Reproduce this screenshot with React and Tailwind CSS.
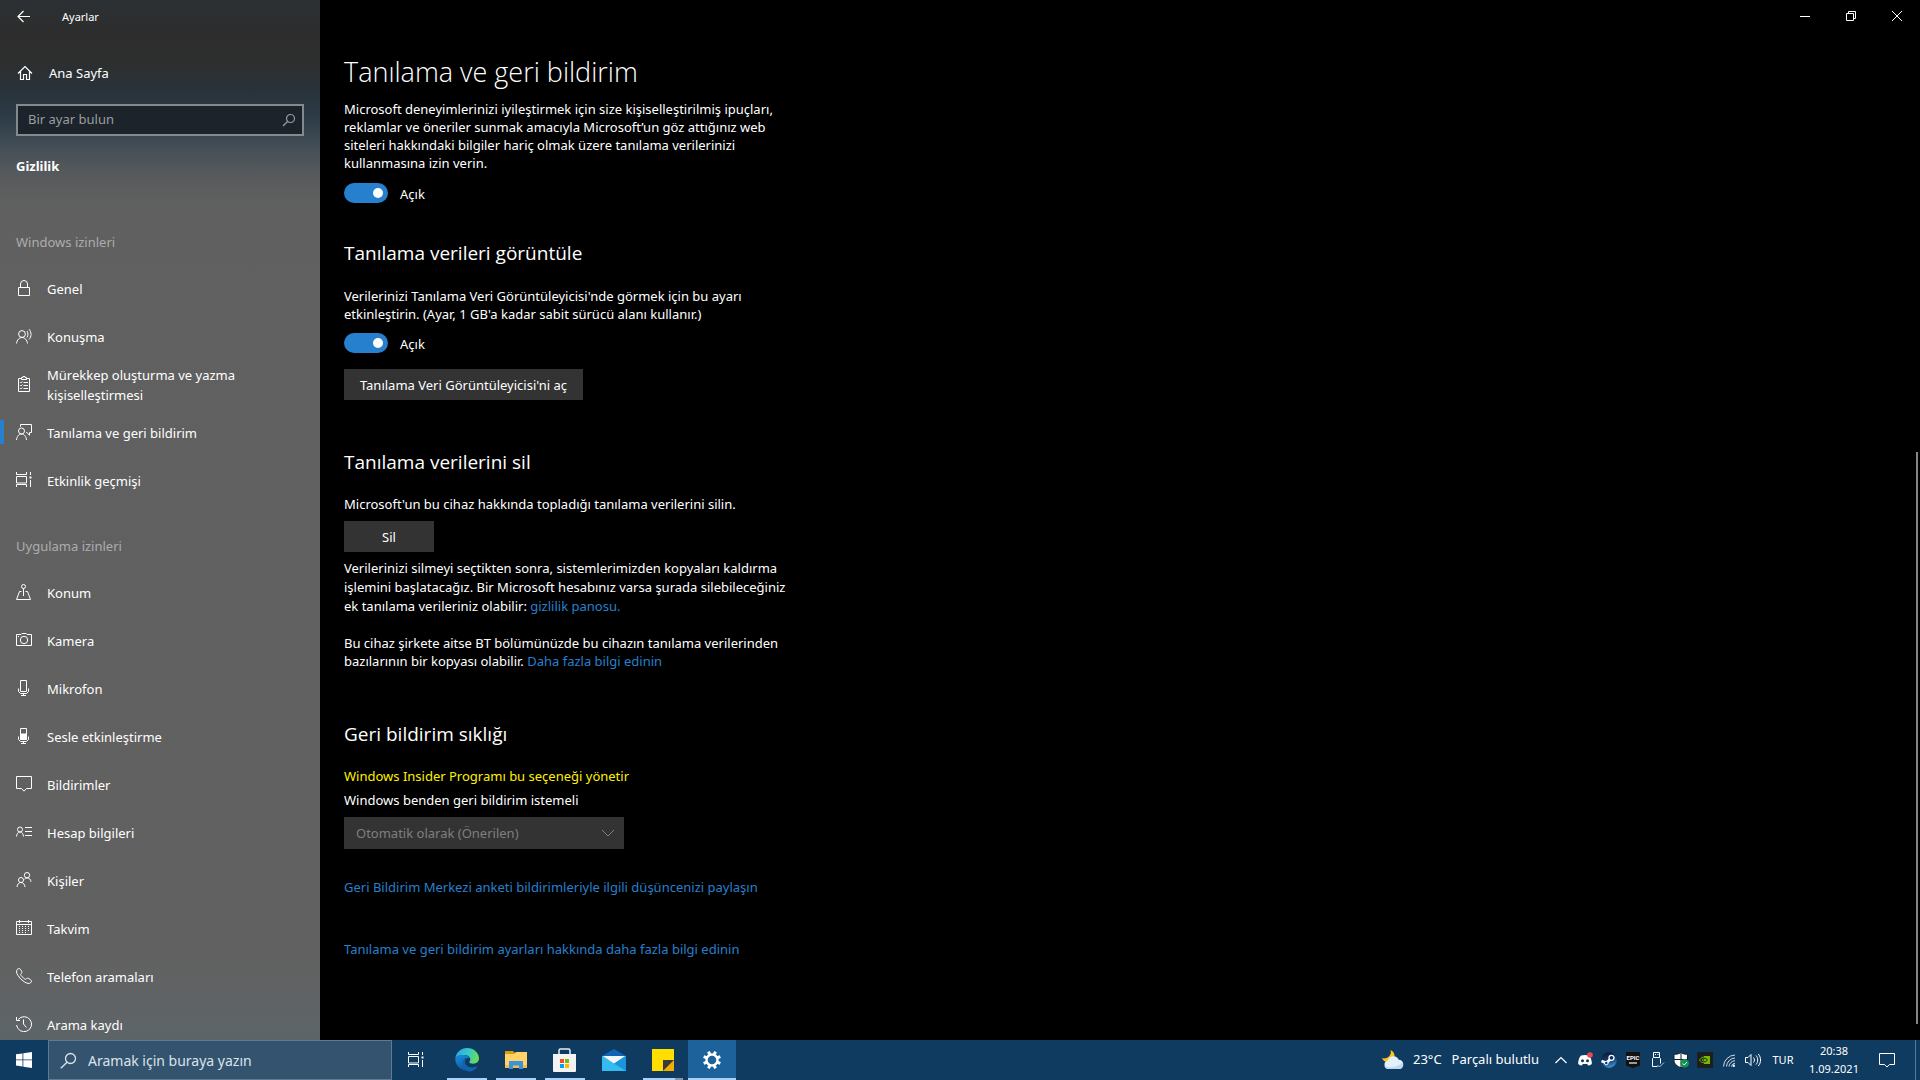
import React from "react";

function Icon({ children, size = "size-4", box = "0 0 16 16", className = "" }) {
  return (
    <svg
      viewBox={box}
      className={`${size} shrink-0 ${className}`}
      fill="none"
      stroke="currentColor"
      strokeWidth="1"
      aria-hidden="true"
    >
      {children}
    </svg>
  );
}

const icons = {
  lock: (
    <path d="M2.5 7.5h11v8h-11zM4.5 7.5V4a3.5 3.5 0 0 1 7 0v3.5" />
  ),
  speech: (
    <>
      <circle cx="6" cy="6" r="3.4" />
      <path d="M.5 15.500C1 12 3 9.500 6 9.500s5 2.500 5.500 6M11 3c1.300 2 1.300 4.500 0 6.500M13 1.200c2.700 3 2.700 7.300 0 10.300" />
    </>
  ),
  clipboard: (
    <>
      <path d="M5 2.500H2.500v13h11v-13H11M5.500 3.500v-2H7V.5h2v1h1.500v2zM7.500 6.500H12M7.500 9.500H12M7.500 12.500H12" />
      <path d="M4 6.200l.8.8L6.300 5.500M4 9.200l.8.8 1.500-1.500M4 12.200l.8.800 1.500-1.500" />
    </>
  ),
  feedback: (
    <>
      <circle cx="5.500" cy="7" r="3" />
      <path d="M.5 16c.4-3.500 2.200-6 5-6s4.600 2.500 5 6M4.500 2.800V.5h11v8h-2v2.700L10.800 8.500H10" />
    </>
  ),
  activity: (
    <>
      <path d="M.5 0v2.500h10V0M.5 4.500h10v6.500H.5zM.5 15v-2.500h10V15M14.500 0v3M14.500 8v7" />
      <rect x="13.500" y="4.500" width="2" height="2" fill="currentColor" stroke="none" />
    </>
  ),
  location: (
    <>
      <circle cx="7.500" cy="2.500" r="2" />
      <path d="M7.500 4.500V12M5.500 7.500h-2l-3 8h14l-3-8h-2" />
    </>
  ),
  camera: (
    <>
      <path d="M.5 2.500H5l.8-1h4.400l.8 1h4.500v11H.5z" />
      <circle cx="8" cy="8" r="3.700" />
      <path d="M2 4.500h1" />
    </>
  ),
  mic: (
    <path d="M4.500.5h6v11h-6zM2.500 8.500v3l2 2h6l2-2v-3M7.500 13.500v2M5 15.500h5" />
  ),
  voice: (
    <>
      <path d="M4.500.5h6v11h-6zM2.500 8.500v3l2 2h6l2-2v-3M7.500 13.500v2M5 15.500h5" />
      <path d="M4.500 6h6v5.500h-6z" fill="currentColor" />
    </>
  ),
  notify: <path d="M.5.5h15v12h-5L8 15.200 5.500 12.500h-5z" />,
  account: (
    <>
      <circle cx="4" cy="5.500" r="2.500" />
      <path d="M.5 12.500c.2-2.600 1.500-4.500 3.500-4.500s3.300 1.900 3.500 4.500M9 3.500h7M9 7.500h7M9 11.500h7" />
    </>
  ),
  people: (
    <>
      <circle cx="11" cy="3.200" r="2.700" />
      <circle cx="5" cy="8" r="2.500" />
      <path d="M1 15c.3-2.600 1.700-4.500 4-4.500S8.700 12.400 9 15M8.500 7.200c.7-.8 1.500-1.300 2.500-1.300 2.300 0 3.700 1.500 4 3.900" />
    </>
  ),
  calendar: (
    <>
      <path d="M.5 1.500h15v13H.5zM.5 4.500h15M3.500 0v3M12.500 0v3" />
      <path d="M3 6.500h10.500M3 8.500h10.500M3 10.500h10.500M3 12.500h7.500" strokeDasharray="1 2" />
    </>
  ),
  phone: (
    <path d="M1.300 1.400C2.300.3 3.600.2 4.400 1.300l1.200 1.900c.6 1 .2 1.700-.5 2.500-.6.6-.5 1.200 0 1.900l3.200 3.200c.7.6 1.300.7 1.900.1.8-.8 1.600-1 2.500-.4l1.900 1.200c1.100.8 1.100 2 .1 3-1.300 1.300-3.800.8-6.300-.8A19 19 0 0 1 2 7.500C.3 5 .1 2.700 1.300 1.400z" />
  ),
  history: (
    <path d="M2.200 3.500A7.500 7.500 0 1 1 .6 9M.5 1v3.500H4M7.500 3.500V8l3 3.500" />
  ),
};

const windowsPermissions = [
  ["lock", "Genel"],
  ["speech", "Konuşma"],
  ["clipboard", "Mürekkep oluşturma ve yazma kişiselleştirmesi"],
  ["feedback", "Tanılama ve geri bildirim"],
  ["activity", "Etkinlik geçmişi"],
];

const appPermissions = [
  ["location", "Konum"],
  ["camera", "Kamera"],
  ["mic", "Mikrofon"],
  ["voice", "Sesle etkinleştirme"],
  ["notify", "Bildirimler"],
  ["account", "Hesap bilgileri"],
  ["people", "Kişiler"],
  ["calendar", "Takvim"],
  ["phone", "Telefon aramaları"],
  ["history", "Arama kaydı"],
];

function NavList({ items, active }) {
  return (
    <ul className="mt-3">
      {items.map(([icon, label]) => (
        <li key={label}>
          <a
            href="#"
            aria-current={label === active ? "page" : undefined}
            className="relative flex h-12 items-center gap-[15px] pl-4 pr-16"
          >
            {label === active && <span className="absolute left-0 top-3 h-6 w-1 bg-[#2780cd]" />}
            <Icon>{icons[icon]}</Icon>
            <span className="pt-0.5 leading-5">{label}</span>
          </a>
        </li>
      ))}
    </ul>
  );
}

function Sidebar() {
  return (
    <aside className="w-80 shrink-0 overflow-hidden bg-[linear-gradient(180deg,#2c3034_0px,#2d2d2d_30px,#2d2e2e_60px,#29323a_90px,#2c3a45_115px,#3a4751_135px,#4a5358_155px,#585b5d_178px,#606060_205px,#616161_960px,#5f6467_1020px,#5c6468_1040px)] text-[13px]">
      <header className="flex h-[34px] items-center gap-[30px] pl-4">
        <button type="button" aria-label="Geri" className="size-4">
          <Icon>
            <path d="M2 7.500h12M7.500 2L2 7.500 7.500 13" strokeWidth="1.200" />
          </Icon>
        </button>
        <span className="text-[11px]">Ayarlar</span>
      </header>
      <a href="#" className="mt-[15px] flex h-12 items-center gap-4 pl-[17px]">
        <Icon>
          <path d="M1 8.500L8 1.500l7 7M3.500 6.500v8h3v-5h3v5h3v-8" strokeWidth="1.200" />
        </Icon>
        <span className="leading-5">Ana Sayfa</span>
      </a>
      <label className="mx-4 mt-[7px] flex h-8 items-center border-2 border-[#84898e] bg-[#1c232a] pl-2.5 pr-[5px] text-[#9a9ea1]">
        <input
          type="text"
          aria-label="Bir ayar bulun"
          placeholder="Bir ayar bulun"
          className="min-w-0 flex-1 bg-transparent outline-none placeholder:text-[#9a9ea1]"
        />
        <Icon>
          <circle cx="9.500" cy="6.500" r="4" strokeWidth="1.200" />
          <path d="M6.500 9.500L2 14" strokeWidth="1.200" />
        </Icon>
      </label>
      <h2 className="ml-4 mt-5 font-bold leading-5">Gizlilik</h2>
      <nav>
        <h3 className="ml-4 mt-14 leading-5 text-[#adadad]">Windows izinleri</h3>
        <NavList items={windowsPermissions} active="Tanılama ve geri bildirim" />
        <h3 className="ml-4 mt-8 leading-5 text-[#adadad]">Uygulama izinleri</h3>
        <NavList items={appPermissions} />
      </nav>
    </aside>
  );
}

function Toggle({ label }) {
  return (
    <label className="flex h-5 w-fit items-center gap-3">
      <input type="checkbox" role="switch" defaultChecked aria-label={label} className="peer sr-only" />
      <span className="flex h-5 w-11 items-center justify-end rounded-full bg-[#2780cd] pr-[5px]">
        <span className="size-2.5 rounded-full bg-white" />
      </span>
      <span className="pt-0.5">Açık</span>
    </label>
  );
}

function SectionTitle({ children, className }) {
  return (
    <h2 className={`font-['Open_Sans','Noto_Sans',sans-serif] text-[19px] leading-7 ${className}`}>
      {children}
    </h2>
  );
}

const linkColor = "text-[#2780cd]";

function Content() {
  return (
    <main className="relative min-w-0 flex-1 bg-black">
      <div className="flex h-8 justify-end">
        <button type="button" aria-label="Simge durumuna küçült" className="flex w-[46px] items-center justify-center">
          <Icon><path d="M3 8.500h10" /></Icon>
        </button>
        <button type="button" aria-label="Önceki boyut" className="flex w-[46px] items-center justify-center">
          <Icon><path d="M3.500 5.500h7v7h-7zM5.500 5.500v-2h7v7h-2" /></Icon>
        </button>
        <button type="button" aria-label="Kapat" className="flex w-[46px] items-center justify-center">
          <Icon><path d="M3 3l10 10M13 3L3 13" /></Icon>
        </button>
      </div>

      <div className="px-6 pt-[22px] text-[13px] leading-[18px]">
        <h1 className="font-['Open_Sans','Noto_Sans',sans-serif] text-[27px] font-light leading-9">
          Tanılama ve geri bildirim
        </h1>
        <p className="mb-[11px] mt-2.5">
          Microsoft deneyimlerinizi iyileştirmek için size kişiselleştirilmiş ipuçları,
          <br />
          reklamlar ve öneriler sunmak amacıyla Microsoft’un göz attığınız web
          <br />
          siteleri hakkındaki bilgiler hariç olmak üzere tanılama verilerinizi
          <br />
          kullanmasına izin verin.
        </p>
        <Toggle label="Kişiselleştirilmiş deneyimler" />

        <SectionTitle className="mt-9">Tanılama verileri görüntüle</SectionTitle>
        <p className="mb-2.5 mt-5">
          Verilerinizi Tanılama Veri Görüntüleyicisi'nde görmek için bu ayarı
          <br />
          etkinleştirin. (Ayar, 1 GB'a kadar sabit sürücü alanı kullanır.)
        </p>
        <Toggle label="Tanılama verileri görüntüle" />
        <button type="button" className="mt-4 block h-[31px] w-[239px] bg-[#333333]">
          Tanılama Veri Görüntüleyicisi'ni aç
        </button>

        <SectionTitle className="mt-12">Tanılama verilerini sil</SectionTitle>
        <p className="mt-[19px]">Microsoft'un bu cihaz hakkında topladığı tanılama verilerini silin.</p>
        <button type="button" className="mt-2 block h-[31px] w-[90px] bg-[#333333]">
          Sil
        </button>
        <p className="mt-[7px] leading-[19px]">
          Verilerinizi silmeyi seçtikten sonra, sistemlerimizden kopyaları kaldırma
          <br />
          işlemini başlatacağız. Bir Microsoft hesabınız varsa şurada silebileceğiniz
          <br />
          ek tanılama verileriniz olabilir: <a href="#" className={linkColor}>gizlilik panosu.</a>
        </p>
        <p className="mt-[18px]">
          Bu cihaz şirkete aitse BT bölümünüzde bu cihazın tanılama verilerinden
          <br />
          bazılarının bir kopyası olabilir. <a href="#" className={linkColor}>Daha fazla bilgi edinin</a>
        </p>

        <SectionTitle className="mt-[50px]">Geri bildirim sıklığı</SectionTitle>
        <p className="mt-[19px] text-[#fff000]">Windows Insider Programı bu seçeneği yönetir</p>
        <label htmlFor="frequency" className="mt-1.5 block">
          Windows benden geri bildirim istemeli
        </label>
        <div className="relative mt-2 w-[280px] text-[#7f7f7f]">
          <select
            id="frequency"
            disabled
            className="block h-8 w-full appearance-none bg-[#333333] pl-3 opacity-100"
          >
            <option>Otomatik olarak (Önerilen)</option>
          </select>
          <Icon className="pointer-events-none absolute right-2 top-2">
            <path d="M2 5l6 6 6-6" />
          </Icon>
        </div>
        <p className="mt-[29px]">
          <a href="#" className={linkColor}>Geri Bildirim Merkezi anketi bildirimleriyle ilgili düşüncenizi paylaşın</a>
        </p>
        <p className="mt-11">
          <a href="#" className={linkColor}>Tanılama ve geri bildirim ayarları hakkında daha fazla bilgi edinin</a>
        </p>
      </div>
      <div className="absolute bottom-4 right-0.5 top-[452px] w-0.5 bg-[#858585]" />
    </main>
  );
}

function EdgeLogo() {
  return (
    <svg viewBox="0 0 24 24" className="size-6" aria-hidden="true">
      <defs>
        <linearGradient id="edgeTop" x1="0" y1="0.300" x2="1" y2="0.500">
          <stop offset="0" stopColor="#2aa7e0" />
          <stop offset="0.500" stopColor="#35c6d0" />
          <stop offset="1" stopColor="#6be04f" />
        </linearGradient>
        <linearGradient id="edgeSide" x1="0" y1="0" x2="0.400" y2="1">
          <stop offset="0" stopColor="#1b8fdc" />
          <stop offset="1" stopColor="#0c59a4" />
        </linearGradient>
      </defs>
      <path d="M.3 10.500C1 4.500 6 0 12 0c7 0 12 5 12 10.300 0 3.400-2.600 5.400-5.700 5.400-2.500 0-4-.8-4-1.700 0-.6 1-1 1-2.700 0-2.400-2.500-4.400-6-4.400C5 6.900 1.500 8 .3 10.500z" fill="url(#edgeTop)" />
      <path d="M.2 11C1.500 8 5 6.900 8.600 6.900c3 0 5.700 1.500 6.500 3.600-3-1.500-6.800.2-6.800 4.100 0 4.500 3.700 7.600 9.300 6.900A12 12 0 0 1 .2 11z" fill="url(#edgeSide)" />
      <path d="M12.500 9.800c-3.500.1-5.200 2.600-5.200 5.200 0 4.500 3.700 8.500 7.600 8.500 3.200-.6 5.600-2.200 7.300-4.600.3-.6-.2-.8-.8-.5-5.400 2.500-11.400.3-11.400-4.900 0-1.700 1-3 2.500-3.700z" fill="#1164b0" />
    </svg>
  );
}

function FolderLogo() {
  return (
    <svg viewBox="0 0 24 24" className="size-6" aria-hidden="true">
      <path d="M1 3h8l2 2v3H1z" fill="#e09a0c" />
      <path d="M1 6h9l2-2h11v16H1z" fill="#ffd365" />
      <path d="M1 17h22v3H1z" fill="#f3bf4a" />
      <path d="M5 21v-8h14v8h-4v-3.500H9V21z" fill="#3a93dc" />
    </svg>
  );
}

function StoreLogo() {
  return (
    <svg viewBox="0 0 24 24" className="size-6" aria-hidden="true">
      <path d="M6 7V2.500A1.500 1.500 0 0 1 7.500 1h8A1.500 1.500 0 0 1 17 2.500V7" fill="none" stroke="#e8eef3" strokeWidth="1.500" />
      <path d="M0 6h23v17a1 1 0 0 1-1 1H1a1 1 0 0 1-1-1z" fill="#f3f3f3" />
      <path d="M7 11h4v4H7z" fill="#f25022" />
      <path d="M12 11h4v4h-4z" fill="#7fba00" />
      <path d="M7 16h4v4H7z" fill="#00a4ef" />
      <path d="M12 16h4v4h-4z" fill="#ffb900" />
    </svg>
  );
}

function MailLogo() {
  return (
    <svg viewBox="0 0 24 24" className="size-6" aria-hidden="true">
      <path d="M0 8l12-7 12 7v7H0z" fill="#0f64b5" />
      <path d="M0 8h24v15H0z" fill="#35bbf0" />
      <path d="M24 8L11 15l13 8z" fill="#1a94dc" />
      <path d="M1 8h22l-11 7.500z" fill="#f2f7fb" />
    </svg>
  );
}

function NotesLogo() {
  return (
    <svg viewBox="0 0 24 24" className="size-6" aria-hidden="true">
      <path d="M1 1h22v21a1 1 0 0 1-1 1H1z" fill="#ffde00" />
      <path d="M12 23l11-11v10a1 1 0 0 1-1 1z" fill="#f5ae00" />
      <path d="M12 12h11L12 23z" fill="#3a3a3a" />
    </svg>
  );
}

function GearLogo() {
  return (
    <svg viewBox="0 0 24 24" className="size-6 text-white" aria-hidden="true">
      <circle cx="12" cy="12" r="5.500" fill="none" stroke="currentColor" strokeWidth="2.400" />
      <g stroke="currentColor" strokeWidth="3">
        {[22.5, 67.5, 112.5, 157.5, 202.5, 247.5, 292.5, 337.5].map((angle) => (
          <path key={angle} d="M12 6V3" transform={`rotate(${angle} 12 12)`} />
        ))}
      </g>
    </svg>
  );
}

const taskbarApps = [
  { name: "Microsoft Edge", logo: <EdgeLogo />, state: "open" },
  { name: "Dosya Gezgini", logo: <FolderLogo />, state: "open" },
  { name: "Microsoft Store", logo: <StoreLogo />, state: "open" },
  { name: "Posta", logo: <MailLogo />, state: "closed" },
  { name: "Yapışkan Notlar", logo: <NotesLogo />, state: "stacked" },
  { name: "Ayarlar", logo: <GearLogo />, state: "active" },
];

const underline = {
  open: "left-1 right-1 bg-[#a9d2fb]",
  stacked: "left-1 right-3 bg-[#a9d2fb]",
  active: "inset-x-0 bg-[#a9d2fb]",
};

function TrayIcon({ label, children, box = "0 0 16 16" }) {
  return (
    <button type="button" aria-label={label} className="flex w-6 items-center justify-center">
      <Icon box={box}>{children}</Icon>
    </button>
  );
}

function Tray() {
  return (
    <div className="flex text-[13px]">
      <button type="button" className="flex items-center gap-2 pr-2.5">
        <svg viewBox="0 0 24 24" className="size-6" aria-hidden="true">
          <path d="M9.500 2c3.500 1.500 5 5.500 3.500 8.500-2 4-6 4.500-9 3-1.500-.8-2.600-2-3-3.500C2.500 10.800 6 10.500 8 8.500c1.800-1.800 2.300-4 1.500-6.500z" fill="#ffc61a" />
          <path d="M7.500 21a4.300 4.300 0 0 1-.6-8.500 5.700 5.700 0 0 1 10.800-.8A4.700 4.700 0 0 1 18.500 21z" fill="#e3f0fb" />
          <path d="M7.500 21a4.300 4.300 0 0 1-4-3c6 2.500 13 1 18.500-3.500.6 3-1 6.500-3.500 6.500z" fill="#bcdaf3" />
        </svg>
        <span className="flex gap-2.5 whitespace-nowrap">
          <span>23°C</span>
          <span>Parçalı bulutlu</span>
        </span>
      </button>
      <TrayIcon label="Gizli simgeleri göster">
        <path d="M2.500 11L8 5.500 13.500 11" strokeWidth="1.200" />
      </TrayIcon>
      <TrayIcon label="Discord">
        <path d="M4 3.500Q8 2.500 12 3.500 15 7 14.800 12 13 13.500 11 13.500L10.300 12H5.700L5 13.500Q3 13.500 1.200 12 1 7 4 3.500z" fill="#fff" stroke="none" />
        <circle cx="5.500" cy="8.700" r="1.500" fill="#0f3b60" stroke="none" />
        <circle cx="10.500" cy="8.700" r="1.500" fill="#0f3b60" stroke="none" />
        <circle cx="13" cy="3" r="2.800" fill="#f04747" stroke="none" />
      </TrayIcon>
      <TrayIcon label="Steam">
        <defs>
          <linearGradient id="steamDisc" x1="0.300" y1="0" x2="0.600" y2="1">
            <stop offset="0" stopColor="#0a1a3c" />
            <stop offset="0.500" stopColor="#12396f" />
            <stop offset="1" stopColor="#3b97d3" />
          </linearGradient>
        </defs>
        <circle cx="8" cy="8" r="7.900" fill="url(#steamDisc)" stroke="none" />
        <path d="M.5 9l4.800 2L9.500 7" stroke="#fff" strokeWidth="2.600" />
        <circle cx="10.500" cy="5.800" r="2.500" fill="#0f2e5c" stroke="#fff" strokeWidth="1.300" />
        <circle cx="5.300" cy="11" r="1.800" fill="#12396f" stroke="#fff" />
      </TrayIcon>
      <button type="button" aria-label="Epic Games" className="flex w-6 items-center justify-center">
        <span className="flex h-4 w-3.5 flex-col items-center bg-[#111111] pt-px font-['Roboto',sans-serif] text-[6px] font-bold leading-[9px] text-white [clip-path:polygon(0_0,100%_0,100%_85%,50%_100%,0_85%)]">
          EPIC
          <span className="h-0.5 w-2 bg-[#9a9a9a]" />
        </span>
      </button>
      <TrayIcon label="Donanımı güvenle kaldır">
        <path d="M4.500 5.500v-5h6v5M6 2.500h1M8.500 2.500h1M3.500 6.500l1-1h6l1 1v5M3.500 6.500v8h5" />
        <path d="M8.500 13l2 2 4.500-4.500" stroke="#b5c8d8" />
      </TrayIcon>
      <TrayIcon label="Windows Güvenliği">
        <path d="M8 .5C6 2 3.500 2.300 1 2.300V8c0 4 3 6.300 7 7.700 4-1.400 6.500-3.700 6.500-7.700V2.300C12 2.300 9.800 2 8 .5z" fill="#fff" stroke="#10202e" />
        <path d="M8 1v14.500M1 7.500h13.500" stroke="#10202e" />
        <circle cx="11.800" cy="11.300" r="4.200" fill="#12924f" stroke="none" />
        <path d="M9.800 11.500l1.500 1.500 2.700-3" stroke="#fff" />
      </TrayIcon>
      <TrayIcon label="NVIDIA Ayarları">
        <path d="M0 0h16v16H0z" fill="#1d1f1d" stroke="none" />
        <path d="M7 4h6v8H7z" fill="#76b900" stroke="none" />
        <path d="M2.500 8c1.500-2.700 3.500-3 5-3 2 0 3 1.500 4 3-1 1.500-2.500 2.700-4.500 2.700S3.500 9.500 2.500 8zM5 8c1-2 4-1.800 4.500 0-.8 1.500-3.500 1.700-4.500 0z" stroke="#76b900" strokeWidth=".9" />
        <path d="M7 6.500c1.500-.5 2.800.5 3.500 1.500-.8 1-2 2-3.500 1.800" stroke="#1d1f1d" strokeWidth=".9" />
      </TrayIcon>
      <TrayIcon label="Kablosuz ağ">
        <path d="M2.500 14.500A12 12 0 0 1 14 3M5.500 14.500A9 9 0 0 1 14 6M8 14.500A6.300 6.300 0 0 1 14 8.700M10.500 14.500a4 4 0 0 1 3.500-3.300" stroke="#cfdbe6" />
        <circle cx="12.800" cy="13.700" r="1.200" fill="currentColor" stroke="none" />
      </TrayIcon>
      <TrayIcon label="Ses">
        <path d="M.5 5.500h2.500l3-3v11l-3-3H.5zM8.500 5.500c1.300 1.500 1.300 3.500 0 5M11 3.500c2.300 2.500 2.300 6.500 0 9M13.300 2c3 3.500 3 8.500 0 12" />
      </TrayIcon>
      <button type="button" className="w-9 text-center text-[11px]">TUR</button>
      <button type="button" className="flex w-[66px] flex-col items-center justify-center text-[11px] leading-[18px]">
        <span>20:38</span>
        <span>1.09.2021</span>
      </button>
      <button type="button" aria-label="Bildirimler" className="mr-2 flex w-10 items-center justify-center">
        <Icon><path d="M.5 1.500h15v11h-5L8 15 5.500 12.500h-5z" /></Icon>
      </button>
      <button type="button" aria-label="Masaüstünü göster" className="w-[5px] border-l border-[#5b7891]" />
    </div>
  );
}

function Taskbar() {
  return (
    <footer className="flex h-10 shrink-0 justify-between bg-[#0f3b61]">
      <div className="flex">
        <button type="button" aria-label="Başlat" className="flex w-12 items-center justify-center">
          <Icon>
            <path d="M0 2.300L6.500 1.400v6.100H0zM7.300 1.300L16 0v7.500H7.300zM0 8.300h6.500v6.200L0 13.600zM7.300 8.300H16V16l-8.700-1.300z" fill="#fff" stroke="none" />
          </Icon>
        </button>
        <label className="flex w-[344px] items-center gap-[11px] border border-[#5f7a92] bg-[#33536f] pl-[11px] text-[14px] text-[#dbe3ea]">
          <Icon size="size-[17px]" box="0 0 17 17">
            <circle cx="10.500" cy="6.500" r="5" strokeWidth="1.300" />
            <path d="M7 10.200L.8 16.300" strokeWidth="1.300" />
          </Icon>
          <input
            type="text"
            aria-label="Aramak için buraya yazın"
            placeholder="Aramak için buraya yazın"
            className="min-w-0 flex-1 bg-transparent outline-none placeholder:text-[#dbe3ea]"
          />
        </label>
        <button type="button" aria-label="Görev Görünümü" className="mr-[3px] flex w-12 items-center justify-center">
          <Icon>{icons.activity}</Icon>
        </button>
        <div className="flex gap-px">
          {taskbarApps.map((app) => (
            <button
              key={app.name}
              type="button"
              aria-label={app.name}
              className={`relative flex w-12 items-center justify-center ${app.state === "active" ? "bg-[#1d629b]" : ""}`}
            >
              {app.logo}
              {underline[app.state] && <span className={`absolute bottom-0 h-0.5 ${underline[app.state]}`} />}
              {app.state === "stacked" && <span className="absolute bottom-0 right-1 h-0.5 w-2 bg-[#8099b1]" />}
            </button>
          ))}
        </div>
      </div>
      <Tray />
    </footer>
  );
}

export default function App() {
  return (
    <div className="flex h-screen flex-col overflow-hidden bg-black font-['Noto_Sans','Open_Sans',sans-serif] text-white">
      <div className="flex min-h-0 flex-1">
        <Sidebar />
        <Content />
      </div>
      <Taskbar />
    </div>
  );
}
